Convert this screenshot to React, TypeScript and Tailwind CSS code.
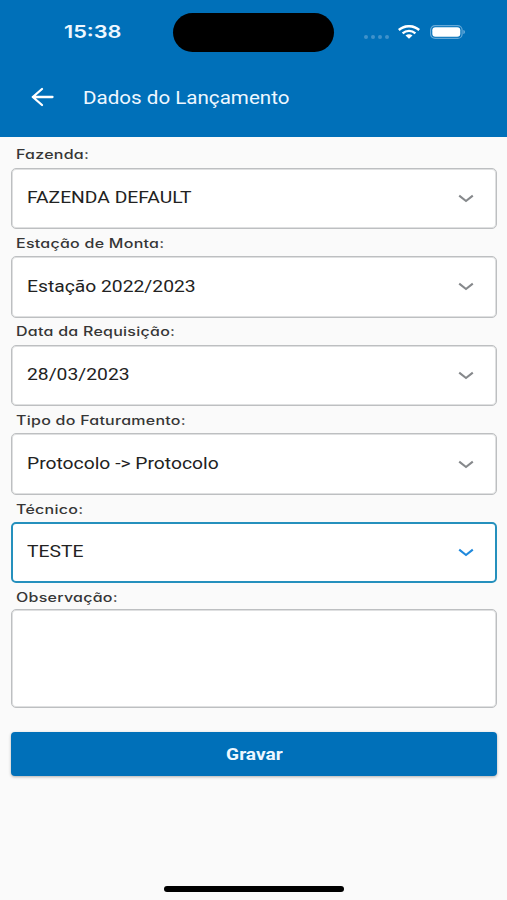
interface SelectFieldProps {
  label: string
  value: string
  active?: boolean
}

const FIELDS: SelectFieldProps[] = [
  { label: 'Fazenda:', value: 'FAZENDA DEFAULT' },
  { label: 'Estação de Monta:', value: 'Estação 2022/2023' },
  { label: 'Data da Requisição:', value: '28/03/2023' },
  { label: 'Tipo do Faturamento:', value: 'Protocolo -> Protocolo' },
  { label: 'Técnico:', value: 'TESTE', active: true },
]

function FieldLabel({ text }: { text: string }) {
  return (
    <div className="pl-[5px] pt-[3px] h-[27px] flex items-center">
      <span className="inline-block origin-left scale-x-[1.28] whitespace-nowrap font-['Inter',sans-serif] [font-feature-settings:'cv11'] text-[12.5px] font-medium tracking-[0.2px] text-[#363636]">
        {text}
      </span>
    </div>
  )
}

function SelectField({ label, value, active }: SelectFieldProps) {
  return (
    <div>
      <FieldLabel text={label} />
      <button
        className={`flex w-full h-[61.6px] items-center justify-between rounded-[5px] bg-white text-left ${
          active ? 'border-2 border-[#2590bd] pl-[14px] pr-[21px]' : 'border border-[#bdbfc1] shadow-[inset_0_0_0_1px_#dfe0e1] pl-[15px] pr-[22px]'
        }`}
      >
        <span className="inline-block origin-left scale-x-[1.168] whitespace-nowrap font-['Roboto',sans-serif] text-[16.5px] text-[#222]">
          {value}
        </span>
        <svg width="16" height="9" viewBox="0 0 16 9" fill="none" className={active ? 'text-[#2089dc]' : 'text-[#86898c]'}>
          <path d="M1.2 1.6 8 7 14.8 1.6" stroke="currentColor" strokeWidth="2.1" />
        </svg>
      </button>
    </div>
  )
}

function StatusBar() {
  return (
    <div className="flex h-[64px] items-center pl-[64px] pr-[42px]">
      <span className="inline-block w-[109px] origin-left scale-x-[1.24] font-['Inter',sans-serif] text-[17.5px] font-semibold text-[#eef7ff]">15:38</span>
      <div className="h-[39px] w-[161px] shrink-0 rounded-full bg-black" />
      <div className="ml-auto flex items-center">
        <div className="mr-[9px] mt-[9px] flex gap-[3px]">
          {[0, 1, 2, 3].map(i => (
            <span key={i} className="h-1 w-1 rounded-full bg-[#3f92cb]" />
          ))}
        </div>
        <svg width="22" height="14" viewBox="0 0 22 14" fill="none" stroke="white" strokeWidth="2.4">
          <path d="M.8 5C6.4-.1 15.6-.1 21.2 5" />
          <path d="M4.6 8.3c3.7-3.2 9.1-3.2 12.8 0" />
          <path d="M7.5 10.6c2-1.7 5-1.7 7 0L11 13.8z" fill="white" stroke="none" />
        </svg>
        <svg width="35" height="14" viewBox="0 0 35 14" fill="none" className="ml-[10px]">
          <rect x=".6" y=".6" width="31.5" height="12.8" rx="4.5" stroke="#65a9d8" strokeWidth="1.2" />
          <rect x="2.3" y="2.2" width="28" height="9.6" rx="3" fill="white" />
          <path d="M33.3 5v4c1.3-.4 1.7-1.2 1.7-2s-.4-1.6-1.7-2z" fill="#65a9d8" />
        </svg>
      </div>
    </div>
  )
}

export default function App() {
  return (
    <div className="flex h-[900px] w-[507px] flex-col overflow-hidden bg-[#fafafa]">
      <header className="h-[136.5px] bg-[#0070b9] text-white">
        <StatusBar />
        <div className="flex h-[66px] items-center pl-[31px]">
          <svg width="24" height="20" viewBox="0 0 24 20" fill="none" stroke="white" strokeWidth="2.3" strokeLinecap="round" strokeLinejoin="round">
            <path d="M11 2 1.8 10l9.2 8M1.800 10h19.700" />
          </svg>
          <h1 className="ml-[28px] origin-left scale-x-[1.176] whitespace-nowrap pt-[2px] font-['Roboto',sans-serif] text-[17.5px] text-[#eef7ff]">
            Dados do Lançamento
          </h1>
        </div>
      </header>

      <main className="flex-1 pl-[11px] pr-[10px] pt-[4px]">
        {FIELDS.map(field => (
          <SelectField key={field.label} {...field} />
        ))}
        <div className="-mb-[1.5px]">
          <FieldLabel text="Observação:" />
          <textarea className="-mt-[1.5px] block h-[99.5px] w-full resize-none rounded-[5px] border border-[#bdbfc1] bg-white shadow-[inset_0_0_0_1px_#dfe0e1]" />
        </div>
        <button className="mt-[25.5px] flex h-[44px] w-full items-center justify-center rounded-[4px] bg-[#0070b9] pt-[2px] shadow-[0_1px_3px_rgba(0,0,0,0.3)]">
          <span className="inline-block scale-x-[1.16] font-['Roboto',sans-serif] text-[16.5px] font-bold text-[#eef7ff]">Gravar</span>
        </button>
      </main>

      <div className="mx-auto mb-[8px] h-[6px] w-[180px] rounded-full bg-black" />
    </div>
  )
}
